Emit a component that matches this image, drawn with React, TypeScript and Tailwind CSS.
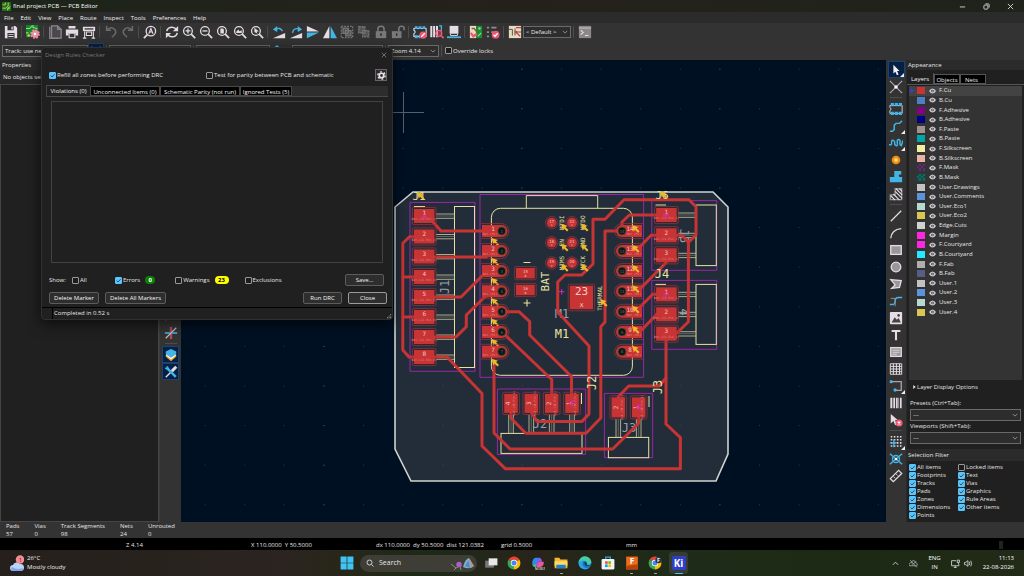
import React, { useState } from "react";
import type { ReactNode } from "react";

const L = "#e4dbe4";
const B = "#42b4e6";
const R = "#ee5673";
const G = "#6b6b6b";

/* ---------- shared pieces ---------- */

function Ico({ children, className = "size-[14px]" }: { children: ReactNode; className?: string }) {
  return (
    <svg viewBox="0 0 16 16" className={className} fill="none" stroke={L} strokeWidth="1.5" aria-hidden="true">
      {children}
    </svg>
  );
}

function ToolButton({ label, active, children, corner }: { label: string; active?: boolean; children: ReactNode; corner?: boolean }) {
  return (
    <button
      type="button"
      aria-label={label}
      className={
        "relative flex size-[17px] shrink-0 items-center justify-center " +
        (active ? "border border-[#1d4272] bg-[#062043]" : "")
      }
    >
      <Ico>{children}</Ico>
      {corner && (
        <svg viewBox="0 0 4 4" className="absolute right-0 bottom-0 size-1" aria-hidden="true">
          <path d="M4 0V4H0Z" fill="#eee" />
        </svg>
      )}
    </button>
  );
}

const VSep = () => <span className="mx-[2px] h-3 w-px shrink-0 bg-[#4c4c4c]" />;
const HSep = () => <span className="my-[2px] h-px w-3 shrink-0 bg-[#4c4c4c]" />;

function Check({ label, checked = false, className = "" }: { label: string; checked?: boolean; className?: string }) {
  const [on, setOn] = useState(checked);
  return (
    <label className={"flex items-center gap-px whitespace-nowrap " + className}>
      <span className="relative flex size-[7px] shrink-0">
        <input
          type="checkbox"
          checked={on}
          onChange={(e) => setOn(e.target.checked)}
          className="size-[7px] appearance-none rounded-[1px] border border-[#999] bg-[#1c1c1c] checked:border-[#5cc4f8] checked:bg-[#5cc4f8]"
        />
        {on && (
          <svg viewBox="0 0 7 7" className="pointer-events-none absolute inset-0 size-[7px]" aria-hidden="true">
            <path d="M1.6 3.6L3 5L5.6 2.2" fill="none" stroke="#0f3a54" strokeWidth=".8" />
          </svg>
        )}
      </span>
      {label}
    </label>
  );
}

function Drop({ label, value, className = "" }: { label: string; value: string; className?: string }) {
  return (
    <span className={"relative flex shrink-0 " + className}>
      <select
        aria-label={label}
        className="h-full w-full appearance-none border border-[#6a6a6a] bg-[#2d2d2d] pl-[2px] text-[#ececec]"
        defaultValue={value}
      >
        <option>{value}</option>
      </select>
      <svg viewBox="0 0 8 8" className="pointer-events-none absolute top-1/2 right-[3px] size-[6px] -translate-y-1/2" aria-hidden="true">
        <path d="M1 2.5L4 5.5L7 2.5" fill="none" stroke="#aaa" />
      </svg>
    </span>
  );
}

const Glass = ({ children }: { children?: ReactNode }) => (
  <>
    <circle cx="6.8" cy="6.8" r="5" />
    <path d="M10.5 10.5L15 15" strokeWidth="2" />
    {children}
  </>
);

/* ---------- top ---------- */

function TitleBar() {
  return (
    <header className="flex h-3 shrink-0 items-center bg-linear-to-r from-[#1d2419] via-[#24211a] to-[#1f231b] pr-[2px] pl-[2px]">
      <svg viewBox="0 0 16 16" className="size-[9px]" aria-hidden="true">
        <rect width="16" height="16" rx="1" fill="#16732c" />
        <path d="M1 5H6V1M1 11H7L11 7V1M10 15V11L15 8" stroke="#f0c72e" strokeWidth="1.6" fill="none" />
        <circle cx="12" cy="11" r="2" fill="#7bd74a" />
      </svg>
      <h1 className="ml-[2px] text-white">final project PCB — PCB Editor</h1>
      <div className="ml-auto flex">
        <button type="button" aria-label="Minimize" className="flex h-3 w-6 items-center justify-center">
          <svg viewBox="0 0 8 8" className="size-[7px]" stroke="#ddd"><path d="M1 4.5H7" /></svg>
        </button>
        <button type="button" aria-label="Restore" className="flex h-3 w-6 items-center justify-center">
          <svg viewBox="0 0 8 8" className="size-[7px]" stroke="#ddd" fill="none"><rect x="1" y="2.4" width="4.6" height="4.6" rx="1" /><path d="M2.8 1H6Q7 1 7 2V5.2" /></svg>
        </button>
        <button type="button" aria-label="Close" className="flex h-3 w-6 items-center justify-center">
          <svg viewBox="0 0 8 8" className="size-[7px]" stroke="#ddd"><path d="M1 1L7 7M7 1L1 7" /></svg>
        </button>
      </div>
    </header>
  );
}

function MenuBar() {
  const items = ["File", "Edit", "View", "Place", "Route", "Inspect", "Tools", "Preferences", "Help"];
  return (
    <nav className="flex h-[11px] shrink-0 items-center gap-[7px] bg-[#2b2b2b] pl-1 text-[#f2f2f2]">
      {items.map((m) => (
        <button key={m} type="button">{m}</button>
      ))}
    </nav>
  );
}

function MainToolbar() {
  return (
    <div role="toolbar" aria-label="Main" className="flex h-[18px] shrink-0 items-center bg-[#333] pl-[2px]">
      <ToolButton label="Save">
        <path d="M1 1H13L15 3V15H1Z" fill={L} stroke="none" />
        <path d="M4 1H11V6H4ZM4 9H12V15H4Z" fill="#333" stroke="none" />
        <path d="M8.5 2H10V5H8.5ZM5 10.5H11V11.5H5ZM5 12.7H11V13.7H5Z" fill={L} stroke="none" />
      </ToolButton>
      <VSep />
      <ToolButton label="Board setup">
        <rect x="0" y="0" width="14" height="14" fill="#15822f" stroke="none" />
        <path d="M0 4H4L7 1M8 0V3L13 4M0 9H3" stroke="#8de07a" strokeWidth="1.2" />
        <circle cx="3" cy="12" r="1.4" fill="#f0cf4a" stroke="none" />
        <circle cx="10.3" cy="10.3" r="4.4" stroke="#f58ba3" strokeWidth="2.2" strokeDasharray="2 1.45" />
        <circle cx="10.3" cy="10.3" r="2.9" stroke="#f58ba3" strokeWidth="2.6" />
        <circle cx="10.3" cy="10.3" r="1.6" fill="#fff" stroke="none" />
      </ToolButton>
      <VSep />
      <ToolButton label="Page settings">
        <path d="M4 1H11L15 5V15H4Z" stroke="#8b868b" fill="#4a484a" />
        <path d="M2 2V15.3H12" stroke="#8b868b" />
        <path d="M11 1V5H15" stroke="#8b868b" />
      </ToolButton>
      <ToolButton label="Print">
        <path d="M4 1H12V4H4ZM1 5H15V12H12V9H4V12H1Z" fill={L} stroke="none" />
        <path d="M4.7 9.5H11.3V14.5H4.7Z" strokeWidth="1.2" />
      </ToolButton>
      <ToolButton label="Plot">
        <path d="M1 2H15V7H1Z" fill={L} stroke="none" />
        <path d="M3 4.5H13" stroke="#333" />
        <path d="M3 7V15M13 7V15M1 15H5M11 15H15M5 8H11V12H5Z" strokeWidth="1.2" />
      </ToolButton>
      <VSep />
      <ToolButton label="Undo"><path d="M3 1V6H8M3 6Q8 1 12 5T9 14" stroke={G} strokeWidth="1.7" /></ToolButton>
      <ToolButton label="Redo"><path d="M13 1V6H8M13 6Q8 1 4 5T7 14" stroke={G} strokeWidth="1.7" /></ToolButton>
      <VSep />
      <ToolButton label="Find">
        <circle cx="9" cy="7" r="5.4" />
        <path d="M5 11L1 15" strokeWidth="2" />
        <path d="M6.6 10L9 4L11.4 10M7.4 8H10.6" strokeWidth="1.3" />
      </ToolButton>
      <VSep />
      <ToolButton label="Refresh">
        <path d="M2 7Q3 2.5 8 2.5Q11 2.5 13.5 5.5M14 9Q13 13.5 8 13.5Q5 13.5 2.5 10.5" strokeWidth="1.7" />
        <path d="M15 1V7H9ZM1 15V9H7Z" fill={L} stroke="none" />
      </ToolButton>
      <ToolButton label="Zoom in"><Glass><path d="M4 6.8H9.6M6.8 4V9.6" /></Glass></ToolButton>
      <ToolButton label="Zoom out"><Glass><path d="M4 6.8H9.6" /></Glass></ToolButton>
      <ToolButton label="Zoom to fit"><Glass><path d="M5 4H8L9 5V9.6H5Z" fill={L} stroke="none" /></Glass></ToolButton>
      <ToolButton label="Zoom to objects"><Glass><path d="M3.5 8L6 5L7.5 7L10 6V9H4Z" fill={L} stroke="none" /></Glass></ToolButton>
      <ToolButton label="Zoom to selection"><Glass><path d="M5 3L10 7L7.6 7.6L8.6 10L5 8Z" fill={L} stroke="none" /></Glass></ToolButton>
      <VSep />
      <ToolButton label="Rotate counterclockwise">
        <path d="M1 15H15V9Z" fill={L} stroke="none" />
        <path d="M4.5 5Q9 2 12 7" stroke={B} strokeWidth="1.6" />
        <path d="M1 5L6 1V8Z" fill={B} stroke="none" />
      </ToolButton>
      <ToolButton label="Rotate clockwise">
        <path d="M1 15H15V9Z" fill={L} stroke="none" />
        <path d="M4 9Q5 3 11 4.5" stroke={B} strokeWidth="1.6" />
        <path d="M15 5L10 1V8Z" fill={B} stroke="none" />
      </ToolButton>
      <ToolButton label="Flip top to bottom">
        <path d="M1 1L15 7.3H1Z" fill={L} stroke="none" />
        <path d="M1 8.7H15L1 15Z" fill={B} stroke="none" />
      </ToolButton>
      <ToolButton label="Mirror">
        <path d="M7.3 1V15H0Z" fill={L} stroke="none" />
        <path d="M8.7 1V15H16Z" fill={B} stroke="none" />
      </ToolButton>
      <ToolButton label="Group">
        <path d="M1.5 1.5H14.5V14.5H1.5Z" stroke="#777" strokeDasharray="2 1.3" />
        <path d="M3.5 3.5H9.5V9.5H3.5ZM6.5 6.5H12.5V12.5H6.5Z" stroke="#777" fill="#555" />
      </ToolButton>
      <ToolButton label="Ungroup">
        <path d="M2 2H9V9H2ZM6.5 6.5H13.5V13.5H6.5Z" stroke="#777" fill="#555" strokeDasharray="2.4 1" />
      </ToolButton>
      <ToolButton label="Lock">
        <path d="M2 7H14V15H2Z" fill="#7a787a" stroke="none" />
        <path d="M4.5 7V4.5Q4.5 1.5 8 1.5T11.5 4.5V7" stroke="#7a787a" strokeWidth="1.8" />
        <path d="M8 9.5V12.5" stroke="#333" strokeWidth="1.8" />
      </ToolButton>
      <ToolButton label="Unlock">
        <path d="M1 7H12V15H1Z" fill="#7a787a" stroke="none" />
        <path d="M9 7V4Q9 1.5 12 1.5T15 4V6" stroke="#7a787a" strokeWidth="1.8" />
        <path d="M6.5 9.5V12.5" stroke="#333" strokeWidth="1.8" />
      </ToolButton>
      <VSep />
      <ToolButton label="Footprint editor">
        <path d="M1 4V6Q4 8 1 10V13H15V4Z" strokeWidth="1.2" />
        <path d="M2 3H15M2 13.5H9" stroke={B} strokeWidth="3.4" strokeDasharray="3.4 1" />
        <circle cx="11.5" cy="11.5" r="4.2" fill={R} stroke="none" />
        <path d="M9.5 13.5L13.5 9.5" stroke="#fff" />
      </ToolButton>
      <ToolButton label="Footprint library browser">
        <path d="M1.5 1V14M4.7 1V14M8 1V14" strokeWidth="2.3" />
        <path d="M10.5 1H13V7" stroke={B} />
        <circle cx="10" cy="9.5" r="3.4" stroke={R} fill="#ee567366" />
        <path d="M12.5 12L15.5 15" stroke={R} strokeWidth="2" />
      </ToolButton>
      <ToolButton label="3D viewer">
        <path d="M3 1H13V10H3Z" fill={L} stroke="none" />
        <path d="M4 10V12H12V10" strokeWidth="1" />
        <path d="M0 14H16" stroke={B} strokeWidth="2" />
      </ToolButton>
      <VSep />
      <ToolButton label="Update PCB from schematic">
        <path d="M1 1H8V15H1Z" fill="#e6dcc0" stroke="none" />
        <path d="M8 1H15V15H8Z" fill="#1a8a3a" stroke="none" />
        <path d="M3 4H6L9 8" stroke="#8a5a3a" />
        <path d="M2 9L5 13L9 10" stroke={R} strokeWidth="2.6" />
        <circle cx="12" cy="4" r="1.4" fill="#8ee06a" stroke="none" />
        <path d="M10 13L14 9" stroke="#8ee06a" />
      </ToolButton>
      <ToolButton label="Design rules checker">
        <path d="M1 3H3.5M1 8H3.5M1 13H3.5M6 3H12M6 8H8" stroke="#8f8a8f" strokeWidth="2" />
        <circle cx="11" cy="11" r="4.5" fill={R} stroke="none" />
        <path d="M8.6 11L10.4 12.8L13.4 9.4" stroke="#fff" />
      </ToolButton>
      <VSep />
      <ToolButton label="Schematic editor">
        <path d="M1 1H15V15H1Z" fill="#e6dcc0" stroke="none" />
        <path d="M1 5H5V12M8 8H15M8 4V12" stroke="#55504a" strokeWidth="1.1" />
        <path d="M9 3H15M9 8L14 13" stroke="#d2374a" strokeWidth="1.6" />
        <circle cx="9" cy="8" r="1.5" fill="#d2374a" stroke="none" />
      </ToolButton>
      <Drop label="Layer pair" value="< Default >" className="h-3 w-12" />
      <VSep />
      <ToolButton label="Scripting console">
        <rect x="1" y="1" width="14" height="14" fill="#8a888a" stroke="none" />
        <path d="M1 3.5H15" stroke="#b9b4b9" />
        <path d="M3 6L6 8.5L3 11M8 12H12" strokeWidth="1.2" />
      </ToolButton>
    </div>
  );
}

function OptionsToolbar() {
  return (
    <div role="toolbar" aria-label="Track options" className="flex h-[19px] shrink-0 items-center bg-[#333] pl-[2px]">
      <Drop label="Track width" value="Track: use netclass width" className="h-3 w-[86px]" />
      <button type="button" aria-label="Automatic width" className="size-4 shrink-0 border border-[#1d4272] bg-[#062043]">
        <Ico className="size-[14px]"><path d="M3 3V11H13V3" /></Ico>
      </button>
      <VSep />
      <Drop label="Via size" value="Via: use netclass sizes" className="h-3 w-[82px]" />
      <VSep />
      <Drop label="Layer" value="F.Cu (PgUp)" className="h-3 w-[74px]" />
      <button type="button" aria-label="Layer pair" className="size-4 shrink-0"><Ico><path d="M8 1L15 7H1Z" fill={B} stroke="none" /></Ico></button>
      <Drop label="Grid" value="Grid: 0.5000 mm" className="ml-[6px] h-3 w-[91px]" />
      <VSep />
      <Drop label="Zoom" value="Zoom 4.14" className="h-3 w-[51px]" />
      <VSep />
      <Check label="Override locks" className="ml-px" />
    </div>
  );
}

/* ---------- left ---------- */

function PropertiesPanel() {
  return (
    <aside className="flex w-40 shrink-0 flex-col border-r border-[#3c3c3c] bg-[#272727]">
      <h2 className="h-[10px] bg-[#2b2b2b] pl-[2px] leading-[10px]">Properties</h2>
      <p className="h-[14px] pl-[3px] leading-[14px] whitespace-nowrap">No objects selected</p>
      <div className="flex-1 border border-[#454545] bg-[#202020]" />
    </aside>
  );
}

function LeftToolbar() {
  return (
    <div role="toolbar" aria-label="Display" className="flex w-[21px] shrink-0 flex-col items-center bg-[#333] pt-[247px]">
      <ToolButton label="Curved ratsnest"><path d="M2 13Q3 4 8 8T14 3" stroke="#999" /></ToolButton>
      <ToolButton label="High contrast">
        <path d="M1 8H15" stroke={B} strokeWidth="1.8" />
        <path d="M8 1V15" stroke="#a84a5c" strokeWidth="2.8" />
        <path d="M2 14L14 2" stroke="#bbb" />
      </ToolButton>
      <HSep />
      <ToolButton label="Appearance panel" active>
        <path d="M8 3L14 8V10L8 15L2 10V8Z" fill="#f29a1f" stroke="none" />
        <path d="M8 4L14 8L8 13L2 8Z" fill="#fff" stroke="none" />
        <path d="M8 1L14 4V7L8 11L2 7V4Z" fill={B} stroke="none" />
      </ToolButton>
      <ToolButton label="Properties panel" active>
        <path d="M2 14L10 6" strokeWidth="1.6" />
        <path d="M9 7L14 2" strokeWidth="3.4" />
        <path d="M5 5L13.5 13.5" stroke={B} strokeWidth="2.8" />
        <path d="M1.500 3.500L5.500 5.500L3.500 1.500" stroke={B} strokeWidth="2" />
      </ToolButton>
    </div>
  );
}

/* ---------- board ---------- */

const SILK = "#e6e3a0";
const CU = "#c83434";
const CY = "#a626b4";

function Pad({ x, y, w, h, n, turn }: { x: number; y: number; w: number; h: number; n: string; turn?: boolean }) {
  return (
    <g>
      <rect x={x - w / 2 - 1.6} y={y - h / 2 - 1.6} width={w + 3.2} height={h + 3.2} rx="1.6" fill="none" stroke="#a02d33" strokeWidth=".8" />
      <rect x={x - w / 2} y={y - h / 2} width={w} height={h} fill={CU} />
      <g transform={turn ? `rotate(-90 ${x} ${y})` : undefined} textAnchor="middle">
        <text x={x} y={y - 0.6} fontSize="6" fill="#f0c8c8">{n}</text>
        <text x={x} y={y + 4.4} fontSize="3" fill="#e08585">Net-(J1-Pin_{n})</text>
      </g>
    </g>
  );
}

function Arrow({ x, y }: { x: number; y: number }) {
  return <path d={`M${x} ${y}l6.500 2l-2 1.200l3 3l-1.500 1.500l-3-3l-1.200 2z`} fill="#efb92e" />;
}

function BoardCanvas() {
  const dotsX = Array.from({ length: 18 }, (_, i) => i);
  const dotsY = Array.from({ length: 12 }, (_, i) => i);
  const j1 = [216, 236.5, 256.5, 277, 297, 317, 337, 357];
  const m1 = [231, 251, 271, 291.3, 311.7, 332, 351.7];
  const sidePins = [215, 235.3, 255.3, 294.3, 314.3, 333.7];
  const tracks = [
    "M433 222L441 231H497",
    "M434 257H486L495 251",
    "M434 297H461L482 276L492 271",
    "M434 337H456L466.3 326.7V315L485 296.7L495 291",
    "M424 236.7H409.5L402.8 243.3V350L409 357H424",
    "M403 277H414M403 317H414",
    "M424 357H447L482 393.5V446L505.5 468.8H680.4V437.7L666 424V333",
    "M666 378L659 386H628.7L618.3 396.7V405",
    "M494 361V433L510 449H612.7L638.7 423.3V405",
    "M502 311.7H519L529.7 321.7V335L571.5 376.5V396",
    "M502 332L551.7 379.5V396",
    "M511 412V418L525.7 433.2H586L600.8 418V326.7L605 322V231H622",
    "M531.3 412L537 421.6H581.7L589 414V346L557.7 312V282L565 275H581.7L593 264V219.3H605L624 199.7H689L696 206.7V235L688.4 242.3V321.7L677 333H668",
    "M688.4 242.3L681.7 235.3H666",
    "M622 231V222L629.3 215H660",
    "M624 251L640 246.7L651 235.3H660",
    "M634 291L640 289L666 262.7V256",
    "M634 311L640 307L652.7 294.3H662",
    "M634 332L641.7 330L656.7 314.3H662",
  ];
  return (
    <main className="min-w-0 flex-1 bg-[#001023]">
      <svg
        viewBox="181 60 705 462"
        preserveAspectRatio="xMidYMid slice"
        className="h-full w-full font-['DejaVu_Sans_Mono',monospace]"
        role="img"
        aria-label="Board layout"
      >
        {dotsX.map((i) =>
          dotsY.map((j) => (
            <rect key={`${i}-${j}`} x={204.6 + 39.6 * i} y={68.7 + 39.6 * j} width="1" height="1" fill={i % 5 === 3 ? "#5b6773" : "#2c3a49"} />
          )),
        )}
        <path d="M403.5 92V133M382 112.5H424" stroke="#56616e" />
        <path d="M413 192H713L728 207V454L716 481H411L395 449V207Z" fill="#232d39" stroke="#cfd2cf" strokeWidth="1.6" />
        {[442.6, 522, 601, 680.5].map((x) =>
          [385, 425, 464.5].map((y) => <rect key={`${x}-${y}`} x={x} y={y} width="1" height="1" fill="#3a4652" />),
        )}

        <g fill="none" stroke={CY} strokeWidth=".9">
          <path d="M410 202.4H475V371.3H410ZM480 194.5H643.6V377.3H480ZM651.8 200.6H716.7V270.3H651.8ZM651.8 280.4H716.7V349.3H651.8ZM497.4 389H585.6V454.4H497.4ZM604.4 393.4H652.7V457.7H604.4Z" />
        </g>
        <g fill="none" stroke={SILK} strokeWidth="1">
          <rect x="454.5" y="206.5" width="20" height="161" />
          <rect x="491.4" y="208.3" width="141" height="167" rx="9" />
          <path d="M526.3 208V195.6H597.7V208" />
          <rect x="696" y="205" width="20.3" height="60.6" />
          <rect x="696" y="284.4" width="20.3" height="60" />
          <rect x="501" y="433.4" width="81" height="20" />
          <rect x="608.4" y="437.4" width="40.3" height="20.3" />
          <path d="M414 206.5H425M655.5 205H666M655.5 284.4H666M581.5 393V404M649 396V407" />
        </g>
        <g fill="none" strokeWidth=".8" stroke="#cfcd98">
          {j1.map((y) => <path key={y} d={`M436 ${y - 2}H454.5M436 ${y + 2.3}H454.5`} />)}
          {sidePins.map((y) => <path key={y} d={`M678 ${y - 2}H696M678 ${y + 2.3}H696`} />)}
          {[511, 531.3, 551.7, 572].map((x) => <path key={x} d={`M${x - 2.3} 415V433M${x + 2.3} 415V433`} />)}
          {[618.3, 638.7].map((x) => <path key={x} d={`M${x - 2.3} 419V437M${x + 2.3} 419V437`} />)}
        </g>
        <g fill="none" strokeWidth=".6" stroke="#848a8c">
          {j1.map((y) => <path key={y} d={`M436 ${y}H454.5`} />)}
          {sidePins.map((y) => <path key={y} d={`M678 ${y}H696`} />)}
          {[511, 531.3, 551.7, 572].map((x) => <path key={x} d={`M${x} 415V433`} />)}
          {[618.3, 638.7].map((x) => <path key={x} d={`M${x} 419V437`} />)}
        </g>

        <g fontSize="12" fill="#9aa0a6" textAnchor="middle">
          <text transform="rotate(-90 449 287)" x="449" y="287">J1</text>
          <text x="540" y="428">J2</text>
          <text x="629" y="432">J3</text>
          <text x="562" y="318">M1</text>
          <text transform="rotate(90 680 236)" x="680" y="236">J5</text>
          <text transform="rotate(90 680 312)" x="680" y="312">4</text>
        </g>

        <g fill="none" stroke={CU} strokeWidth="3" strokeLinejoin="round" strokeLinecap="round">
          {tracks.map((d) => <path key={d} d={d} />)}
        </g>

        {j1.map((y, i) => <Pad key={y} x={424.2} y={y} w={20.5} h={14} n={String(i + 1)} />)}
        {sidePins.map((y, i) => <Pad key={y} x={666.4} y={y} w={20.5} h={14} n={String((i % 3) + 1)} />)}
        {[572, 551.7, 531.3, 511].map((x, i) => <Pad key={x} x={x} y={403.4} w={13.5} h={19} n={String(i + 1)} turn />)}
        {[638.7, 618.3].map((x, i) => <Pad key={x} x={x} y={407.4} w={13.5} h={20} n={String(i + 1)} turn />)}

        {m1.map((y, i) => (
          <g key={y} textAnchor="middle">
            <path d={`M481 ${y - 7.4}H501.6a7.400 7.400 0 0 1 0 14.800H481`} fill="none" stroke="#a02d33" strokeWidth=".8" />
            <path d={`M482 ${y - 6}H501.6a6 6 0 0 1 0 12H482Z`} fill={CU} />
            <circle cx="501.7" cy={y} r="4" fill="#081a1c" stroke="#5f5a35" strokeWidth=".6" />
            <text x="493" y={y} fontSize="6" fill="#f0c8c8">{i + 1}</text>
            <text x="490" y={y + 4} fontSize="3" fill="#e08585">Net-(M1)</text>
            <text x="501.7" y={y + 1.6} fontSize="4" fill="#a05050">{i + 1}</text>
            <path d={`M643 ${y - 7.4}H622a7.400 7.400 0 0 0 0 14.800H643`} fill="none" stroke="#a02d33" strokeWidth=".8" />
            <path d={`M642 ${y - 6}H622a6 6 0 0 0 0 12H642Z`} fill={CU} />
            <circle cx="622" cy={y} r="4" fill="#081a1c" stroke="#5f5a35" strokeWidth=".6" />
            <text x="630" y={y} fontSize="6" fill="#f0c8c8">{14 - i}</text>
            <text x="634" y={y + 4} fontSize="3" fill="#e08585">Net-(M1)</text>
            <text x="622" y={y + 1.6} fontSize="4" fill="#a05050">{14 - i}</text>
            <Arrow x={491.500} y={y + 7} />
            <Arrow x={632} y={y - 6} />
          </g>
        ))}

        {[222.7, 242.7, 263].map((y, i) => (
          <g key={y} textAnchor="middle" fontSize="4" fill="#f0c8c8">
            {[551.7, 572].map((x, k) => (
              <g key={x}>
                <circle cx={x} cy={y} r="6.2" fill="none" stroke="#a02d33" strokeWidth=".8" />
                <circle cx={x} cy={y} r="4.9" fill={CU} />
                <text x={x} y={y + 0.4}>{k ? 22 - i : 17 + i}</text>
                <text x={x} y={y + 3.6} fontSize="3">x</text>
              </g>
            ))}
            <text transform={`rotate(-90 564 ${y})`} x="564" y={y} fontSize="6" fill={SILK}>{["MTDI", "EN", "MIMS"][i]}</text>
            <text transform={`rotate(-90 585 ${y})`} x="585" y={y} fontSize="6" fill={SILK}>{["MTDO", "GND", "MTCK"][i]}</text>
            <Arrow x={561} y={y + 1} />
            <Arrow x={581} y={y + 1} />
          </g>
        ))}

        <g textAnchor="middle">
          {[[273.2, "15"], [290, "16"]].map(([y, n]) => (
            <g key={n}>
              <rect x="514.6" y={Number(y) - 6.6} width="21.6" height="13.2" rx="1.4" fill="none" stroke="#a02d33" strokeWidth=".8" />
              <rect x="516" y={Number(y) - 5.2} width="18.8" height="10.4" fill={CU} />
              <text x="525.4" y={Number(y) - 0.2} fontSize="4" fill="#f0c8c8">{n}</text>
              <text x="525.4" y={Number(y) + 4} fontSize="4" fill="#f0c8c8">x</text>
            </g>
          ))}
          <rect x="568.2" y="284.2" width="26.4" height="26.6" rx="1.4" fill="none" stroke="#a02d33" strokeWidth=".8" />
          <rect x="569.8" y="285.8" width="23.2" height="23.4" fill={CU} />
          <text x="581.5" y="295.4" fontSize="11" fill="#f0cccc">23</text>
          <text x="581.5" y="306.500" fontSize="7" fill="#f0cccc">x</text>
          <g fill={SILK}>
            <text transform="rotate(-90 549 281.5)" x="549" y="281.5" fontSize="11">BAT</text>
            <text x="562" y="338" fontSize="12">M1</text>
            <text transform="rotate(-90 602 298)" x="602" y="298" fontSize="6">THERMAL</text>
            <text x="419" y="200" fontSize="11">J1</text>
            <text x="662" y="199" fontSize="11">J6</text>
            <text x="662" y="278" fontSize="12">J4</text>
            <text transform="rotate(-90 596 383)" x="596" y="383" fontSize="12">J2</text>
            <text transform="rotate(-90 662 387)" x="662" y="387" fontSize="12">J3</text>
          </g>
        </g>
        <path d="M523.5 262.5H530.5M523.5 303H530.5M527 299.5V306.5" stroke={SILK} strokeWidth="1.1" />
        <Arrow x={417} y={192} />
        <Arrow x={660} y={191} />
        <Arrow x={600} y={299} />
        <path d="M559 291.7H564.5M561.7 289V294.5M421.5 217H427M424.2 214V219M663 215H669M666 212V218M663 294.3H669M666 291V297M569 403.4H575M572 400V406M636 407.4H642M638.7 404V410" stroke="#e02ad0" strokeWidth=".9" />
      </svg>
    </main>
  );
}

/* ---------- right ---------- */

function RightToolbar() {
  return (
    <div role="toolbar" aria-label="Drawing tools" className="flex w-[20px] shrink-0 flex-col items-center bg-[#333] pt-px">
      <ToolButton label="Select" active corner><path d="M5 2L12 9H9.2L11 13L9 14L7.3 10L5 12Z" fill="#f3eef3" stroke="none" /></ToolButton>
      <ToolButton label="Local ratsnest"><path d="M1 1L15 15M15 1L1 15" stroke="#a9a4a9" /><circle cx="8" cy="8" r="2" fill="#fff" stroke="none" /></ToolButton>
      <HSep />
      <ToolButton label="Place footprint">
        <path d="M1 4V6Q4 8 1 10V13H15V4Z" strokeWidth="1" />
        <path d="M2 3H15M2 13H15" stroke={B} strokeWidth="3.6" strokeDasharray="3.6 1" />
      </ToolButton>
      <ToolButton label="Route tracks" corner><path d="M1 14H4L6 12V7L8 5H12L15 2" stroke={B} strokeWidth="1.7" /></ToolButton>
      <ToolButton label="Tune length" corner><path d="M0 10H2Q3 10 3 7T5 5T6.5 8T8 11T9.5 8T11 4T12.5 7T14 11L16 5" stroke={B} strokeWidth="1.7" /></ToolButton>
      <ToolButton label="Place via"><circle cx="8" cy="8" r="3.4" stroke="#f2920c" strokeWidth="3" fill="#ffe0a0" /></ToolButton>
      <ToolButton label="Draw filled zone"><path d="M6 1H14V5H12Q10 6.500 12 8H15V14H1V8H6Z" fill={B} stroke="none" /></ToolButton>
      <ToolButton label="Draw rule area">
        <path d="M7 2H14.5V14.5H1.5V9H7Z" stroke="#9a959a" />
        <path d="M2 10L7 15M5 8L12 15M7 5L15 13M8 2L15 9M12 2L15 5" strokeWidth="1.3" />
      </ToolButton>
      <HSep />
      <ToolButton label="Draw line"><path d="M2 14L14 2" /></ToolButton>
      <ToolButton label="Draw arc"><path d="M2 14Q3 4 14 3" /></ToolButton>
      <ToolButton label="Draw rectangle"><rect x="2" y="3" width="12" height="10" fill="#9a959a" /></ToolButton>
      <ToolButton label="Draw circle"><circle cx="8" cy="8" r="5.5" fill="#9a959a" /></ToolButton>
      <ToolButton label="Draw polygon"><path d="M2 3L14 4L12 12L3 13L7 9Z" fill="#9a959a" /></ToolButton>
      <ToolButton label="Draw bezier"><path d="M1 12H4Q7 12 7 8T11 4H15" stroke={B} /><path d="M2 5H7V14" strokeWidth="1" stroke="#999" /></ToolButton>
      <ToolButton label="Place image">
        <rect x="1" y="1" width="14" height="14" rx="1" fill={L} stroke="none" />
        <path d="M3 13L6.5 7L9 10L11 8L13.5 13Z" fill="#444" stroke="none" /><circle cx="11" cy="5" r="1.5" fill="#444" stroke="none" />
      </ToolButton>
      <ToolButton label="Place text"><path d="M3 3.5H13M8 3V14" strokeWidth="2.4" /></ToolButton>
      <ToolButton label="Draw text box"><rect x="2" y="3" width="12" height="10" fill="#9a959a" /><path d="M4 6H12M4 8.3H12M4 10.5H9" strokeWidth="1" /></ToolButton>
      <ToolButton label="Draw table"><path d="M1.5 2H14.5V14H1.5ZM1.5 5H14.5M1.5 8H14.5M1.5 11H14.5M5 2V14M8.5 2V14M12 2V14" strokeWidth="1.1" /></ToolButton>
      <ToolButton label="Draw dimension" corner><path d="M3 3H14V13H7" stroke="#a9a4a9" /><circle cx="2.5" cy="3" r="1.8" fill={B} stroke="none" /><circle cx="7" cy="12.5" r="2" fill={B} stroke="none" /></ToolButton>
      <ToolButton label="Place barcode"><path d="M2.5 2V14M6 2V14M9 2V14M13.5 2V14" strokeWidth="1.9" /><path d="M11 2V14M4.5 2V14" strokeWidth=".7" /></ToolButton>
      <ToolButton label="Delete"><path d="M2 1L10 8H7L9 13L7 14L5 9L2 12Z" fill={L} stroke="none" /><circle cx="11.5" cy="11.5" r="4" fill={R} stroke="none" /><path d="M10 10L13 13M13 10L10 13" stroke="#fff" /></ToolButton>
      <HSep />
      <ToolButton label="Grid origin" corner><path d="M2 2H15M2 5.5H15M2 9H15M2 12.5H15" strokeWidth="1.8" strokeDasharray="1.8 1.7" /><path d="M1 9H9M5.5 5V14" stroke={B} /></ToolButton>
      <ToolButton label="Drill origin"><path d="M1 2L15 14M15 2L1 14" stroke={B} strokeWidth="1.7" /><circle cx="8" cy="8" r="4" stroke={B} /><circle cx="8" cy="8" r="1.5" fill="#fff" stroke="none" /></ToolButton>
      <ToolButton label="Measure"><path d="M1.5 11L11 1.5L14.5 5L5 14.5Z" /><path d="M5 8.5L7 10.5M8 5.5L10 7.5" strokeWidth="1" /></ToolButton>
    </div>
  );
}

const layers: [string, string][] = [
  ["F.Cu", "#c83434"], ["B.Cu", "#4d7fc4"], ["F.Adhesive", "#840084"], ["B.Adhesive", "#000084"],
  ["F.Paste", "#a3928c"], ["B.Paste", "#00a5a5"], ["F.Silkscreen", "#f2eda1"], ["B.Silkscreen", "#e8b2a7"],
  ["F.Mask", "#5b2f6b"], ["B.Mask", "#0d6b63"], ["User.Drawings", "#c2c2c2"], ["User.Comments", "#5994dc"],
  ["User.Eco1", "#b4dbd2"], ["User.Eco2", "#d8c852"], ["Edge.Cuts", "#d0d2cd"], ["Margin", "#ff26e2"],
  ["F.Courtyard", "#ff26e2"], ["B.Courtyard", "#26e9ff"], ["F.Fab", "#afafaf"], ["B.Fab", "#585d84"],
  ["User.1", "#c2c2c2"], ["User.2", "#5994dc"], ["User.3", "#b4dbd2"], ["User.4", "#d8c852"],
];

function AppearancePanel() {
  return (
    <aside className="flex w-[118px] shrink-0 flex-col border-l border-[#2a2a2a] bg-[#202020]">
      <h2 className="h-[10px] shrink-0 bg-[#2b2b2b] pl-px leading-[10px]">Appearance</h2>
      <div role="tablist" className="mt-[4px] flex h-[11px] shrink-0 items-end border-b border-[#555] text-[#f2f2f2]">
        <button role="tab" aria-selected="true" type="button" className="h-[11px] w-[27px] border-r border-[#555]">Layers</button>
        <button role="tab" aria-selected="false" type="button" className="h-[10px] w-[26px] border border-[#555] bg-black">Objects</button>
        <button role="tab" aria-selected="false" type="button" className="h-[10px] w-[26px] border border-[#555] bg-black pr-[3px]">Nets</button>
      </div>
      <div className="mx-[2px] mt-px min-h-0 flex-1 overflow-hidden bg-[#333]">
        <ul className="grid h-[231px] grid-rows-24">
          {layers.map(([name, color], i) => (
            <li key={name} className={"flex items-center " + (i === 0 ? "bg-[#434343]" : "")}>
              <svg viewBox="0 0 8 8" className="ml-px size-[5px]" aria-hidden="true">{i === 0 && <path d="M1 0L7 4L1 8Z" fill="#3a3af0" />}</svg>
              <span className="ml-[2px] h-[7px] w-2 shrink-0" style={{ backgroundColor: color }}>
                {name.endsWith("Mask") && (
                  <svg viewBox="0 0 8 7" className="size-full opacity-40" aria-hidden="true"><path d="M0 0H2V2H0ZM4 0H6V2H4ZM2 2H4V4H2ZM6 2H8V4H6ZM0 4H2V7H0ZM4 4H6V7H4Z" fill="#222" /></svg>
                )}
              </span>
              <svg viewBox="0 0 14 10" className="ml-[4px] h-[6px] w-[7px]" aria-hidden="true">
                <path d="M0 5Q3 0 7 0T14 5Q11 10 7 10T0 5Z" fill="#cfc8cf" /><circle cx="7" cy="5" r="2.6" fill="#444" /><circle cx="7" cy="5" r="1.2" fill="#ddd" />
              </svg>
              <span className="ml-[3px] leading-[9px]">{name}</span>
            </li>
          ))}
        </ul>
      </div>
      <details className="mt-[2px] h-[10px] shrink-0 pl-[6px] leading-[10px]">
        <summary className="flex items-center gap-[1px]">
          <svg viewBox="0 0 4 6" className="h-1 w-[3px]" aria-hidden="true"><path d="M0 0L4 3L0 6Z" fill="#ddd" /></svg>
          Layer Display Options
        </summary>
      </details>
      <div className="mt-[6px] shrink-0 px-[3px]">
        <p className="h-[11px] leading-[11px]">Presets (Ctrl+Tab):</p>
        <Drop label="Presets" value="---" className="h-3 w-full" />
        <p className="h-[11px] leading-[11px]">Viewports (Shift+Tab):</p>
        <Drop label="Viewports" value="---" className="h-3 w-full" />
      </div>
      <h2 className="mt-[5px] h-3 shrink-0 bg-[#2b2b2b] pl-px leading-3">Selection Filter</h2>
      <div className="mt-[2px] grid shrink-0 grid-flow-col grid-cols-[49px_1fr] grid-rows-[repeat(7,8px)] pb-[3px] pl-[2px]">
        {["All items", "Footprints", "Tracks", "Pads", "Zones", "Dimensions", "Points"].map((t) => <Check key={t} label={t} checked className="leading-[8px]" />)}
        {["Locked items", "Text", "Vias", "Graphics", "Rule Areas", "Other items"].map((t, i) => <Check key={t} label={t} checked={i > 0} className="leading-[8px]" />)}
      </div>
    </aside>
  );
}

/* ---------- dialog ---------- */

function DialogButton({ children, className, strong }: { children: ReactNode; className: string; strong?: boolean }) {
  return (
    <button type="button" className={"h-3 rounded-[2px] border bg-[#2e2e2e] leading-[10px] whitespace-nowrap text-[#f4f4f4] " + (strong ? "border-[#9a9a9a] " : "border-[#5c5c5c] ") + className}>
      {children}
    </button>
  );
}

function DrcDialog() {
  return (
    <section role="dialog" aria-label="Design Rules Checker" className="absolute top-[47px] left-[41px] flex h-[273px] w-[352px] flex-col rounded-[4px] border border-[#303030] bg-[#202020] shadow-[0_4px_14px_rgba(0,0,0,0.6)]">
      <div className="flex h-[14px] items-center justify-between pr-[5px] pl-[3px] text-[#777]">
        <h2>Design Rules Checker</h2>
        <button type="button" aria-label="Close dialog"><svg viewBox="0 0 8 8" className="size-[6px]" stroke="#888"><path d="M1 1L7 7M7 1L1 7" /></svg></button>
      </div>
      <div className="mt-[7px] flex h-3 items-center pr-[5px] pl-[7px]">
        <Check label="Refill all zones before performing DRC" checked className="w-[157px]" />
        <Check label="Test for parity between PCB and schematic" />
        <button type="button" aria-label="Settings" className="ml-auto flex size-3 items-center justify-center border border-[#666] bg-[#2e2e2e]">
          <svg viewBox="0 0 16 16" className="size-[9px]" fill="none" stroke="#e9e0e9" aria-hidden="true"><circle cx="8" cy="8" r="4" strokeWidth="3" /><circle cx="8" cy="8" r="6.5" strokeWidth="2.5" strokeDasharray="3.4 3.4" /></svg>
        </button>
      </div>
      <div role="tablist" className="mx-[4px] mt-[5px] flex h-[11px] shrink-0 items-end border-b border-[#484848] bg-[#2d2d2d] text-[#f4f4f4]">
        <button role="tab" aria-selected="true" type="button" className="h-[11px] w-[44px] border-t border-l border-[#484848] bg-[#202020] whitespace-nowrap">Violations (0)</button>
        <button role="tab" aria-selected="false" type="button" className="h-[10px] w-[70px] border border-[#484848] bg-black whitespace-nowrap">Unconnected Items (0)</button>
        <button role="tab" aria-selected="false" type="button" className="h-[10px] w-[80px] border border-[#484848] bg-black whitespace-nowrap">Schematic Parity (not run)</button>
        <button role="tab" aria-selected="false" type="button" className="h-[10px] w-[52px] border border-[#484848] bg-black whitespace-nowrap">Ignored Tests (5)</button>
      </div>
      <div className="mx-[9px] mt-[4px] min-h-0 flex-1 border border-[#424242] bg-[#202020]" />
      <div className="mt-[11px] flex h-3 items-center pr-[8px] pl-[7px]">
        <span className="w-[23px]">Show:</span>
        <Check label="All" className="w-[43px]" />
        <Check label="Errors" checked />
        <span className="ml-[5px] flex h-2 w-[10px] items-center justify-center rounded-full bg-[#0a800a] font-bold text-white">0</span>
        <Check label="Warnings" className="ml-[20px]" />
        <span className="ml-[5px] flex h-2 w-[14px] items-center justify-center rounded-full bg-[#ffff00] font-bold text-black">23</span>
        <Check label="Exclusions" className="ml-[16px]" />
        <DialogButton className="ml-auto w-[39px]">Save...</DialogButton>
      </div>
      <div className="mt-[6px] flex items-center gap-[6px] pr-[5px] pl-[7px]">
        <DialogButton className="w-[50px]">Delete Marker</DialogButton>
        <DialogButton className="w-[61px]">Delete All Markers</DialogButton>
        <DialogButton className="ml-auto w-[39px]">Run DRC</DialogButton>
        <DialogButton className="w-[39px]" strong>Close</DialogButton>
      </div>
      <footer className="mt-[3px] flex h-3 shrink-0 items-center border-t border-black">
        <span className="h-full w-[11px] border-r border-black" />
        <span className="pl-px leading-[9px]">Completed in 0.52 s</span>
        <svg viewBox="0 0 6 6" className="ml-auto size-[5px] self-end" aria-hidden="true"><path d="M4 0H5V1H4ZM2 2H3V3H2ZM4 2H5V3H4ZM0 4H1V5H0ZM2 4H3V5H2ZM4 4H5V5H4Z" fill="#bbb" /></svg>
      </footer>
    </section>
  );
}

/* ---------- bottom ---------- */

function InfoBar() {
  const info = [["Pads", "57"], ["Vias", "0"], ["Track Segments", "98"], ["Nets", "24"], ["Unrouted", "0"]];
  return (
    <dl className="flex h-4 shrink-0 gap-[15px] bg-[#333] pl-[6px]">
      {info.map(([k, v]) => (
        <div key={k}>
          <dt className="leading-2">{k}</dt>
          <dd className="leading-2">{v}</dd>
        </div>
      ))}
    </dl>
  );
}

function StatusBar() {
  return (
    <div role="status" className="flex h-3 shrink-0 items-center bg-black pt-px pl-px whitespace-nowrap">
      {["", "Z 4.14", "X 110.0000  Y 50.5000", "dx 110.0000  dy 50.5000  dist 121.0382", "grid 0.5000", "mm"].map((t, i) => (
        <span key={i} className="w-[125px] shrink-0 whitespace-pre">{t}</span>
      ))}
      <span className="mr-[21px] ml-auto h-2 w-1 bg-[#222]" />
    </div>
  );
}

function TaskIcon({ label, children, running, active }: { label: string; children: ReactNode; running?: boolean; active?: boolean }) {
  return (
    <button type="button" aria-label={label} className={"relative flex h-[22px] w-[19px] items-center justify-center rounded-[3px] " + (active ? "bg-[#363b34]" : "")}>
      <svg viewBox="0 0 24 24" className="size-[14px]" fill="none" aria-hidden="true">{children}</svg>
      {running && <span className={"absolute bottom-0 h-px rounded-full " + (active ? "w-2 bg-[#4cc2ff]" : "w-[3px] bg-[#aaa]")} />}
    </button>
  );
}

const Chrome = () => (
  <>
    <path d="M12 12L2.5 6.5A11 11 0 0 1 21.5 6.5Z" fill="#e94235" />
    <path d="M12 12L2.5 6.5A11 11 0 0 0 12 23Z" fill="#34a853" />
    <path d="M12 12L12 23A11 11 0 0 0 21.5 6.5Z" fill="#fbbc04" />
    <circle cx="12" cy="12" r="5.5" fill="#fff" />
    <circle cx="12" cy="12" r="4.3" fill="#4285f4" />
  </>
);

function TaskBar() {
  return (
    <footer className="grid h-[26px] shrink-0 grid-cols-[1fr_auto_1fr] items-center bg-[linear-gradient(90deg,#25201b,#2b2420_28%,#29261a_32%,#1d2a18_42%,#29241a_52%,#1d2b18_65%,#1c2a15_85%,#222a18)]">
      <div className="flex items-center gap-[3px] pl-[10px] leading-[9px] text-[#f0f0f0]">
        <svg viewBox="0 0 28 34" className="h-[17px] w-[14px]" aria-hidden="true">
          <path d="M6 32A6 6 0 0 1 6 20A8 8 0 0 1 20 18A7 7 0 0 1 22 32Z" fill="#b9d3fa" />
          <path d="M5 32A5 5 0 0 1 4 24Q14 31 26 26A6 6 0 0 1 22 32Z" fill="#7ea7ec" />
          <circle cx="20" cy="9" r="8.500" fill="#f58b93" />
          <text x="17.500" y="13" fontSize="11" fill="#3a1518">1</text>
        </svg>
        <p>26°C<br />Mostly cloudy</p>
      </div>
      <div className="flex items-center">
        <button type="button" aria-label="Start" className="flex w-[22px] justify-center">
          <svg viewBox="0 0 24 24" className="size-[14px]" aria-hidden="true"><path d="M1 1H11.4V11.4H1ZM12.6 1H23V11.4H12.6ZM1 12.6H11.4V23H1ZM12.6 12.6H23V23H12.6Z" fill="#41c4f5" /></svg>
        </button>
        <label className="ml-[2px] flex h-[17px] w-[117px] items-center rounded-full bg-[#3f3e36] pr-[3px] pl-[6px]">
          <svg viewBox="0 0 16 16" className="size-2 shrink-0" fill="none" stroke="#ddd" strokeWidth="1.8" aria-hidden="true"><circle cx="7" cy="7" r="5" /><path d="M11 11L15 15" /></svg>
          <input aria-label="Search" placeholder="Search" className="ml-[5px] w-12 bg-transparent text-[7px] outline-none placeholder:text-[#e6e6e6]" />
          <svg viewBox="0 0 48 26" className="ml-auto h-[13px] w-6 shrink-0" aria-hidden="true">
            <path d="M2 14L12 22L20 18M12 22L8 26M20 18L22 26" stroke="#7a9a6a" strokeWidth="2" fill="none" />
            <circle cx="18" cy="15" r="5.5" fill="#b05ad0" />
            <path d="M26 20Q30 4 38 2L48 18Q40 26 26 20Z" fill="#7fb0c8" />
            <path d="M38 2L44 20L48 18Z" fill="#c58a6a" />
            <path d="M30 18L37 6L40 22Z" fill="#5b86c4" />
          </svg>
        </label>
        <div className="ml-1 flex w-[207px] justify-between">
          <TaskIcon label="Task view"><rect x="2" y="8" width="15" height="12" fill="#777" /><rect x="8" y="4" width="15" height="12" fill="#e8e8e8" /></TaskIcon>
          <TaskIcon label="Chrome"><Chrome /></TaskIcon>
          <TaskIcon label="Copilot">
            <path d="M8 3H14L11 14H2Q2 4 8 3Z" fill="#2b8cf0" /><path d="M14 3Q18 3 19 10H13L10 18H5Z" fill="#8a5cf0" /><path d="M13 10H22Q22 18 16 19H9Z" fill="#e8589a" /><path d="M2 14H9L8 19Q3 19 2 14Z" fill="#41c47a" />
            <text x="7" y="24" fontSize="7" fill="#fff">M365</text>
          </TaskIcon>
          <TaskIcon label="File Explorer" running><path d="M1 3H9L11 6H23V21H1Z" fill="#f5b92e" /><path d="M1 9H23V17H1Z" fill="#ffd968" /><path d="M4 15H20V21H4Z" fill="#1b7fd4" /></TaskIcon>
          <TaskIcon label="Edge">
            <circle cx="12" cy="12" r="11" fill="#1a78c8" /><path d="M1 12A11 11 0 0 1 23 11Q22 16 15 15Q17 9 11 8Q4 8 1 12Z" fill="#45cfa0" /><path d="M1 12Q3 7 9 8Q5 14 10 19Q14 22 19 20A11 11 0 0 1 1 12Z" fill="#2aa5e8" /><path d="M12 10Q9 14 14 17Q19 18 21 16Q15 16 15 14Q15 11 12 10Z" fill="#0f3a66" />
          </TaskIcon>
          <TaskIcon label="Store"><path d="M8 6V2H16V6" stroke="#35a5e5" strokeWidth="2" /><rect x="1" y="5" width="22" height="18" rx="2" fill="#eef4fa" /><path d="M7 9H11.5V13.5H7Z" fill="#f25022" /><path d="M12.5 9H17V13.5H12.5Z" fill="#7fba00" /><path d="M7 14.5H11.5V19H7Z" fill="#00a4ef" /><path d="M12.5 14.5H17V19H12.5Z" fill="#ffb900" /></TaskIcon>
          <TaskIcon label="Fusion" running><rect x="2" y="1" width="20" height="22" fill="#f26a1b" /><path d="M2 17L22 14V23H2Z" fill="#b8420c" /><text x="8" y="14" fontSize="14" fontWeight="bold" fill="#fff">F</text></TaskIcon>
          <TaskIcon label="Chrome profile" running><Chrome /><circle cx="18" cy="7" r="5.5" fill="#26334a" /><text x="15.5" y="10.5" fontSize="9" fontWeight="bold" fill="#fff">F</text></TaskIcon>
          <TaskIcon label="KiCad" running active><rect x="0" y="0" width="24" height="24" rx="2" fill="#2f3fc4" /><text x="3" y="18" fontSize="17" fontWeight="bold" fill="#fff">Ki</text></TaskIcon>
        </div>
      </div>
      <div className="flex items-center justify-end gap-[10px] pr-[10px] text-center leading-[9px] text-white">
        <svg viewBox="0 0 8 8" className="size-[7px]" fill="none" stroke="#ddd" aria-hidden="true"><path d="M1 5.5L4 2.5L7 5.5" /></svg>
        <svg viewBox="0 0 16 16" className="size-[9px]" fill="none" stroke="#aaa" strokeWidth="1.5" aria-hidden="true"><path d="M1 12A3 3 0 0 1 4 7A4 4 0 0 1 12 7A3 3 0 0 1 14 12ZM2 2L14 15M5 10L13 5" /></svg>
        <span>ENG<br />IN</span>
        <span className="flex gap-1">
          <svg viewBox="0 0 16 16" className="size-[9px]" fill="none" stroke="#ddd" strokeWidth="1.5" aria-hidden="true"><path d="M9 3H1V12H14V9M5 15H10M7.5 12V15M11 2V6H15V2ZM13 6V9" /></svg>
          <svg viewBox="0 0 16 16" className="size-[9px]" fill="none" stroke="#ddd" strokeWidth="1.5" aria-hidden="true"><path d="M1 6H3L7 3V13L3 10H1ZM9.5 5Q11 8 9.5 11M12 3Q15 8 12 13" /></svg>
        </span>
        <time className="text-right">11:13<br />22-08-2026</time>
      </div>
    </footer>
  );
}

export default function App() {
  return (
    <div className="relative flex h-screen flex-col overflow-hidden bg-[#333] font-['Open_Sans','Noto_Sans',sans-serif] text-[6px] leading-[10px] text-[#e6e6e6]">
      <TitleBar />
      <MenuBar />
      <MainToolbar />
      <OptionsToolbar />
      <div className="flex min-h-0 flex-1">
        <PropertiesPanel />
        <LeftToolbar />
        <BoardCanvas />
        <RightToolbar />
        <AppearancePanel />
      </div>
      <InfoBar />
      <StatusBar />
      <TaskBar />
      <DrcDialog />
    </div>
  );
}
